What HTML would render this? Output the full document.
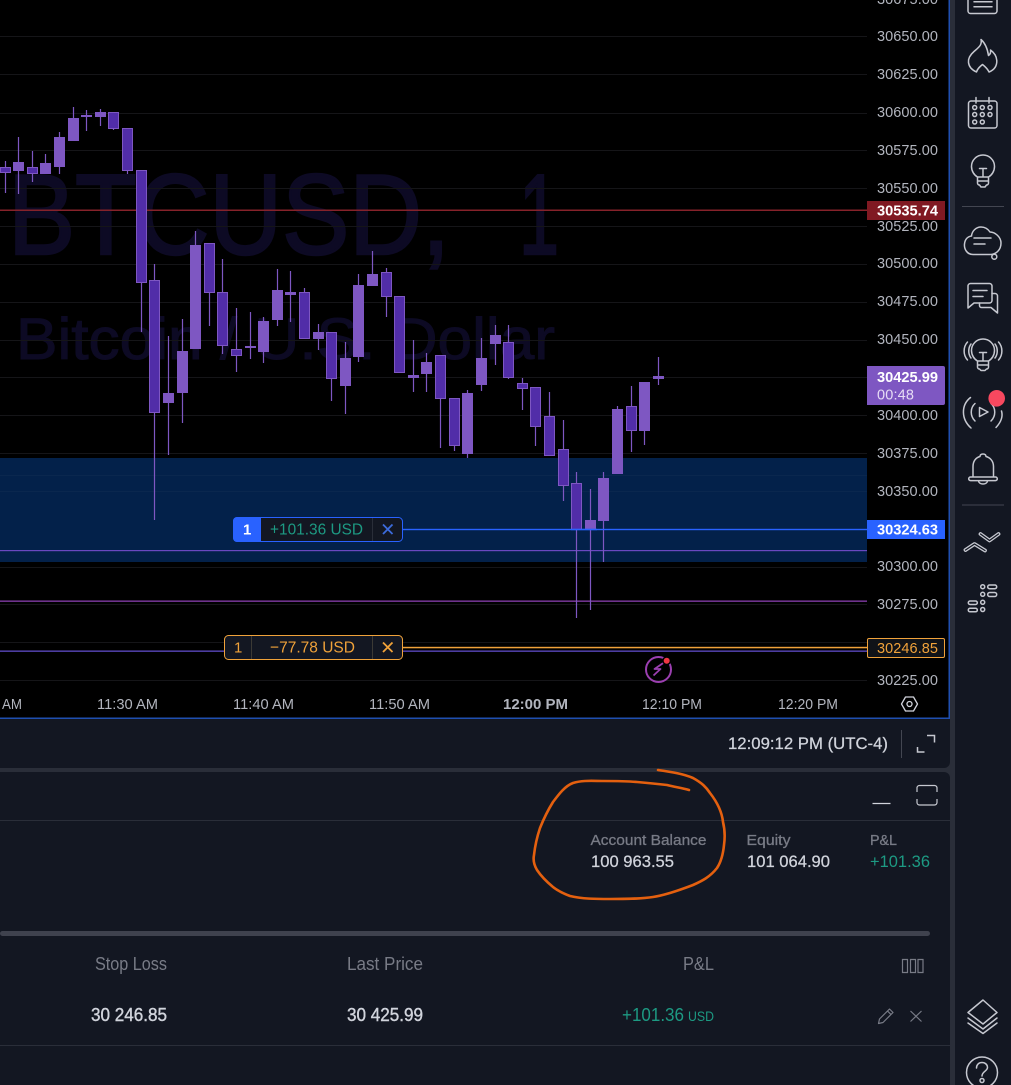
<!DOCTYPE html>
<html><head><meta charset="utf-8"><title>BTCUSD</title>
<style>
html,body{margin:0;padding:0;background:#131722;width:1011px;height:1085px;overflow:hidden}
svg{display:block}
text{font-family:"Liberation Sans",sans-serif}
.p{font-size:14.5px;fill:#b2b5be}
.t{font-size:15px;fill:#b2b5be}
.i{fill:none;stroke:#c6c8d0;stroke-width:1.5;stroke-linejoin:round;stroke-linecap:round}
</style></head><body>
<svg width="1011" height="1085" viewBox="0 0 1011 1085" xmlns="http://www.w3.org/2000/svg">
<!-- backgrounds -->
<rect width="1011" height="1085" fill="#2a2e39"/>
<rect x="955" width="56" height="1085" fill="#131722"/>
<path d="M0 719H950V762a6 6 0 0 1-6 6H0Z" fill="#131722"/>
<path d="M0 772H944a6 6 0 0 1 6 6V1085H0Z" fill="#131722"/>
<rect width="949" height="718" fill="#000"/>
<!-- watermark -->
<text x="8" y="254" font-size="114" fill="#0d0a24" stroke="#0d0a24" stroke-width="2.5" textLength="442" lengthAdjust="spacingAndGlyphs">BTCUSD,</text>
<text x="519" y="254" font-size="114" fill="#0d0a24" stroke="#0d0a24" stroke-width="2.5" textLength="40" lengthAdjust="spacingAndGlyphs">1</text>
<text x="16" y="359" font-size="58" fill="#0d0a24" stroke="#0d0a24" stroke-width="1" textLength="539" lengthAdjust="spacingAndGlyphs">Bitcoin / U.S. Dollar</text>
<!-- grid -->
<path d="M0 36.5H867M0 74.5H867M0 113.5H867M0 150.500H867M0 188.500H867M0 226.500H867M0 264.500H867M0 302.500H867M0 340.500H867M0 377.500H867M0 415.500H867M0 453.500H867M0 567.500H867M0 604.500H867M0 642.500H867M0 680.500H867" stroke="#151518" stroke-width="1"/>
<!-- band -->
<rect x="0" y="458" width="867" height="104" fill="#03214a"/>
<path d="M0 475.500H867M0 491.500H867" stroke="#0a274e" stroke-width="1"/>
<!-- lines -->
<rect x="0" y="209.500" width="867" height="1.500" fill="#86222a"/>
<rect x="0" y="550" width="867" height="1.200" fill="#6a48c0"/>
<rect x="0" y="600.500" width="867" height="1.300" fill="#8a3fae"/>
<rect x="0" y="650.500" width="867" height="1.300" fill="#5f4cc8"/>
<rect x="403" y="646.800" width="465" height="1.500" fill="#f0a23a"/>
<!-- wicks -->
<path stroke="#7e57c2" stroke-width="1.200" fill="none" d="M5.500 161V193M18.500 137V194M32.500 151V182M45.500 154V174M59.500 132V174M73.500 107V141M86.500 110V131M100.500 109V126M113.500 112V130M127.500 128V174M141.500 170V332M154.500 264V520M168.500 336V455M182.500 319V423M195.500 231V349M209.500 243V326M222.500 259V354M236.500 308V372M250.500 312V359M263.500 317V363M277.500 269V326M290.500 271V322M304.500 288V339M318.500 324V350M331.500 332V401M345.500 342V414M358.500 274V362M372.500 251V286M386.500 268V317M399.500 296V373M413.500 340V392M426.500 353V392M440.500 355V448M454.500 398V451M467.500 390V458M481.500 338V391M495.500 325V365M508.500 325V379M522.500 378V410M535.500 387V446M549.500 392V456M563.500 420V501M576.500 472V618M590.500 489V610M603.500 472V562M617.500 406V474M631.500 386V452M644.500 382V445M658.500 357V385"/>
<!-- up bodies -->
<path fill="#7e57c2" d="M13 162h11v9h-11zM40 163h11v11h-11zM54 137h11v30h-11zM68 118h11v23h-11zM81 115h11v2h-11zM95 112h11v5h-11zM163 393h11v10h-11zM177 351h11v42h-11zM190 245h11v104h-11zM245 346h11v2h-11zM258 321h11v31h-11zM272 290h11v30h-11zM285 292h11v3h-11zM313 332h11v7h-11zM340 358h11v28h-11zM353 285h11v72h-11zM367 274h11v12h-11zM408 375h11v3h-11zM421 362h11v12h-11zM462 393h11v61h-11zM476 358h11v27h-11zM490 335h11v9h-11zM585 520h11v10h-11zM598 478h11v43h-11zM612 409h11v65h-11zM639 382h11v49h-11zM653 376h11v3h-11z"/>
<!-- down bodies -->
<path fill="#512da8" stroke="#7e57c2" stroke-width="1" d="M0.500 167.500h10v5h-10zM27.500 167.500h10v6h-10zM108.500 112.500h10v16h-10zM122.500 128.500h10v42h-10zM136.500 170.500h10v112h-10zM149.500 280.500h10v132h-10zM204.500 243.500h10v49h-10zM217.500 292.500h10v53h-10zM231.500 349.500h10v6h-10zM299.500 292.500h10v46h-10zM326.500 332.500h10v46h-10zM381.500 272.500h10v24h-10zM394.500 296.500h10v76h-10zM435.500 355.500h10v43h-10zM449.500 398.500h10v47h-10zM503.500 342.500h10v35h-10zM517.500 383.500h10v5h-10zM530.500 387.500h10v39h-10zM544.500 416.500h10v39h-10zM558.500 449.500h10v36h-10zM571.500 483.500h10v46h-10zM626.500 406.500h10v24h-10z"/>
<!-- blue position line -->
<rect x="403" y="528.800" width="465" height="1.400" fill="#2962ff"/>
<rect x="571" y="528.800" width="26" height="1.400" fill="#2962ff"/>
<!-- position tag blue -->
<rect x="233.500" y="517.500" width="169" height="24" rx="4" fill="#131722" stroke="#2962ff"/>
<path d="M237 517H261V542H237a4 4 0 0 1-4-4V521a4 4 0 0 1 4-4Z" fill="#2962ff"/>
<text x="243" y="534.500" font-size="15" font-weight="bold" fill="#fff">1</text>
<text x="270" y="534.500" font-size="16" fill="#1d9a83" textLength="93" lengthAdjust="spacingAndGlyphs">+101.36 USD</text>
<rect x="372" y="518" width="1" height="23" fill="#2a2e39"/>
<path d="M383 524.500l9.500 9.500M392.500 524.500l-9.500 9.500" stroke="#3c6bdc" stroke-width="1.800" fill="none"/>
<!-- position tag orange -->
<rect x="224.500" y="635.500" width="178" height="24" rx="4" fill="#131722" stroke="#f0a23a"/>
<rect x="251" y="636" width="1" height="23" fill="#3c3a35"/>
<rect x="372" y="636" width="1" height="23" fill="#3c3a35"/>
<text x="234" y="652.500" font-size="15" fill="#f0a23a">1</text>
<text x="270" y="652.500" font-size="16" fill="#f0a23a" textLength="85" lengthAdjust="spacingAndGlyphs">−77.78 USD</text>
<path d="M383 642.500l9.500 9.500M392.500 642.500l-9.500 9.500" stroke="#f0a23a" stroke-width="1.800" fill="none"/>
<!-- lightning -->
<circle cx="658.500" cy="669.500" r="12.500" fill="none" stroke="#9b3fb0" stroke-width="2"/>
<path d="M664 662.500l-9.500 6.500h6l-7 6.500" fill="none" stroke="#9b3fb0" stroke-width="1.800" stroke-linejoin="round"/>
<circle cx="666.700" cy="660.700" r="4.500" fill="#000"/>
<circle cx="666.700" cy="660.700" r="3" fill="#f23645"/>
<!-- price axis -->
<rect x="867" y="0" width="81.500" height="717" fill="#000"/>
<g class="p">
<text x="877" y="4" textLength="61">30675.00</text>
<text x="877" y="41" textLength="61">30650.00</text>
<text x="877" y="79" textLength="61">30625.00</text>
<text x="877" y="117" textLength="61">30600.00</text>
<text x="877" y="155" textLength="61">30575.00</text>
<text x="877" y="193" textLength="61">30550.00</text>
<text x="877" y="231" textLength="61">30525.00</text>
<text x="877" y="268" textLength="61">30500.00</text>
<text x="877" y="306" textLength="61">30475.00</text>
<text x="877" y="344" textLength="61">30450.00</text>
<text x="877" y="420" textLength="61">30400.00</text>
<text x="877" y="458" textLength="61">30375.00</text>
<text x="877" y="496" textLength="61">30350.00</text>
<text x="877" y="571" textLength="61">30300.00</text>
<text x="877" y="609" textLength="61">30275.00</text>
<text x="877" y="685" textLength="61">30225.00</text>
</g>
<rect x="867" y="201" width="78" height="19" fill="#801922"/>
<text x="877" y="215.500" font-size="14.500" font-weight="bold" fill="#fff" textLength="61" lengthAdjust="spacingAndGlyphs">30535.74</text>
<path d="M867 366H943a2 2 0 0 1 2 2V403a2 2 0 0 1-2 2H867Z" fill="#7e57c2"/>
<text x="877" y="382" font-size="14.500" font-weight="bold" fill="#fff" textLength="61" lengthAdjust="spacingAndGlyphs">30425.99</text>
<text x="877" y="399.500" font-size="14.500" fill="#e6dcf5" textLength="37">00:48</text>
<rect x="867" y="520" width="78" height="19" fill="#2962ff"/>
<text x="877" y="534.500" font-size="14.500" font-weight="bold" fill="#fff" textLength="61" lengthAdjust="spacingAndGlyphs">30324.63</text>
<rect x="867.500" y="638.500" width="77" height="19" rx="1.500" fill="#101318" stroke="#f0a23a"/>
<text x="877" y="653" font-size="14.500" fill="#f0a23a" textLength="61">30246.85</text>
<!-- time axis -->
<g class="t">
<text x="2" y="709" textLength="20" lengthAdjust="spacingAndGlyphs">AM</text>
<text x="97" y="709" textLength="61" lengthAdjust="spacingAndGlyphs">11:30 AM</text>
<text x="233" y="709" textLength="61" lengthAdjust="spacingAndGlyphs">11:40 AM</text>
<text x="369" y="709" textLength="61" lengthAdjust="spacingAndGlyphs">11:50 AM</text>
<text x="503" y="709" textLength="65" font-weight="bold" lengthAdjust="spacingAndGlyphs">12:00 PM</text>
<text x="642" y="709" textLength="60" lengthAdjust="spacingAndGlyphs">12:10 PM</text>
<text x="778" y="709" textLength="60" lengthAdjust="spacingAndGlyphs">12:20 PM</text>
</g>
<path d="M901.500 704l4-7h8l4 7-4 7h-8z" fill="none" stroke="#d1d4dc" stroke-width="1.300" stroke-linejoin="round"/>
<circle cx="909.500" cy="704" r="2.500" fill="none" stroke="#d1d4dc" stroke-width="1.300"/>
<!-- chart border -->
<rect x="948.500" y="0" width="1.500" height="719" fill="#1f4fb0"/>
<rect x="0" y="717.500" width="950" height="1.500" fill="#1f4fb0"/>
<!-- time bar -->
<text x="728" y="749" font-size="17" fill="#d1d4dc" stroke="#d1d4dc" stroke-width=".25" textLength="160" lengthAdjust="spacingAndGlyphs">12:09:12 PM (UTC-4)</text>
<rect x="901" y="730" width="1" height="28" fill="#434651"/>
<path d="M917.500 747v5h7M927 735.500h7.500v7" fill="none" stroke="#c6c8d0" stroke-width="1.500"/>
<!-- panel -->
<rect x="0" y="820" width="950" height="1" fill="#2a2e39"/>
<path d="M872.500 803.500h18" stroke="#d1d4dc" stroke-width="1.200"/>
<path d="M917 792v-4a2.500 2.500 0 0 1 2.500-2.500h15a2.500 2.500 0 0 1 2.500 2.500v4M917 799v3.500a2.500 2.500 0 0 0 2.500 2.500h15a2.500 2.500 0 0 0 2.500-2.500v-3.500" fill="none" stroke="#c6c8d0" stroke-width="1.200"/>
<text x="590.500" y="845" font-size="15" fill="#787b86" stroke="#787b86" stroke-width=".3" textLength="116" lengthAdjust="spacingAndGlyphs">Account Balance</text>
<text x="591" y="867" font-size="17" fill="#d1d4dc" stroke="#d1d4dc" stroke-width=".25" textLength="83" lengthAdjust="spacingAndGlyphs">100 963.55</text>
<text x="746.500" y="845" font-size="15" fill="#787b86" stroke="#787b86" stroke-width=".3" textLength="44" lengthAdjust="spacingAndGlyphs">Equity</text>
<text x="747" y="867" font-size="17" fill="#d1d4dc" stroke="#d1d4dc" stroke-width=".25" textLength="83" lengthAdjust="spacingAndGlyphs">101 064.90</text>
<text x="870" y="845" font-size="15" fill="#787b86" stroke="#787b86" stroke-width=".3" textLength="27" lengthAdjust="spacingAndGlyphs">P&amp;L</text>
<text x="870" y="867" font-size="17" fill="#1d9a83" textLength="60" lengthAdjust="spacingAndGlyphs">+101.36</text>
<rect x="0" y="931" width="930" height="5" rx="2.500" fill="#3f424e"/>
<text x="95" y="970" font-size="18" fill="#787b86" textLength="72" lengthAdjust="spacingAndGlyphs">Stop Loss</text>
<text x="347" y="970" font-size="18" fill="#787b86" textLength="76" lengthAdjust="spacingAndGlyphs">Last Price</text>
<text x="683" y="970" font-size="18" fill="#787b86" textLength="31" lengthAdjust="spacingAndGlyphs">P&amp;L</text>
<text x="91" y="1021" font-size="18" fill="#d1d4dc" stroke="#d1d4dc" stroke-width=".4" textLength="76" lengthAdjust="spacingAndGlyphs">30 246.85</text>
<text x="347" y="1021" font-size="18" fill="#d1d4dc" stroke="#d1d4dc" stroke-width=".4" textLength="76" lengthAdjust="spacingAndGlyphs">30 425.99</text>
<text x="622" y="1021" font-size="18" fill="#1d9a83" textLength="62" lengthAdjust="spacingAndGlyphs">+101.36</text>
<text x="688" y="1021" font-size="13.500" fill="#1d9a83" textLength="26" lengthAdjust="spacingAndGlyphs">USD</text>
<rect x="0" y="1045" width="950" height="1" fill="#2a2e39"/>
<path d="M902.500 959.500h5v13h-5zM910.500 959.500h5v13h-5zM918 959.500h5v13h-5z" fill="none" stroke="#787b86" stroke-width="1.200"/>
<path d="M878.500 1023.500l1-4.500 10-10 3.500 3.500-10 10zM887.500 1011l3.500 3.500" fill="none" stroke="#787b86" stroke-width="1.200" stroke-linejoin="round"/>
<path d="M910.500 1011l11 10.500M921.500 1011l-11 10.500" fill="none" stroke="#787b86" stroke-width="1.200"/>
<!-- ink circle -->
<path d="M658 770C672 772 684 774 693 778C702 783 706 787 710 793C717 802 722 812 723 822C725 830 725 838 724 845C723 855 721 862 717 868C710 877 702 881 693 885C680 890 666 895 653 897C640 899 625 899 610 899C597 899 582 899 570 896C562 893 558 891 553 887C547 882 541 876 537 870C534 865 533 860 534 855C535 846 537 837 540 828C544 818 548 810 553 802C559 794 565 786 573 783C583 780 593 781 603 781C615 781 626 781 637 782C648 783 658 784 667 785C675 787 682 788 689 790" fill="none" stroke="#e4600f" stroke-width="2.600" stroke-linecap="round"/>
<!-- sidebar icons -->
<g class="i">
<path d="M968 0V11a2.500 2.500 0 0 0 2.500 2.500H994.500a2.500 2.500 0 0 0 2.500-2.500V0M974 1.700h18M974 6.700h18"/>
<path d="M981 39.500C982.500 45 978 48 974 51.500C970 55 968 58.500 968.500 62.500C969 67 972 70 976.500 72C977.500 68.500 980 66.500 982.500 64.500C985 66.500 987.500 68.500 989 72C994 70 997 66 996.800 60.500C996.500 56 994 52.500 990.500 50C991 52 990.500 54 988.500 55.500C987.500 49 985 43 981 39.500Z"/>
<rect x="968.500" y="101" width="28.500" height="27" rx="2.500"/>
<path d="M976 97.500v5.500M989 97.500v5.500"/>
<circle cx="974.700" cy="107.500" r="2"/><circle cx="982.300" cy="107.500" r="2"/><circle cx="990" cy="107.500" r="2"/>
<circle cx="974.700" cy="114.500" r="2"/><circle cx="982.300" cy="114.500" r="2"/><circle cx="990" cy="114.500" r="2"/>
<circle cx="974.700" cy="122" r="2"/><circle cx="982.300" cy="122" r="2"/>
<path d="M977.500 177C974 175 971.500 171 971.500 166.500A11.500 11.500 0 0 1 994.500 166.500C994.500 171 992 175 988.500 177V183a2 2 0 0 1-2 2L985 187H981L979.500 185a2 2 0 0 1-2-2ZM979.500 168.500H986.500M983 168.500V177M977.500 177H988.500M977.500 181H988.500"/>
<path d="M973 254.500C967 254.500 964 249 964.500 244C965 239 968 236.500 971.500 236C972 231 976 227 981 227C985 227 988 229 990 232C995 232 1001 237 1001 243C1001 250 996 254.500 990 254.500Z"/>
<path d="M974 238H991M974 244H985"/>
<circle cx="994.300" cy="256.700" r="2.500"/>
<path d="M985 303H974L968 308V286a2.500 2.500 0 0 1 2.500-2.500H989.500a2.500 2.500 0 0 1 2.500 2.500V300.500a2.500 2.500 0 0 1-2.500 2.500H985"/>
<path d="M973 290.500H987M973 296.500H983M992 293.500H995a2.500 2.500 0 0 1 2.500 2.500V313L991 307.500H981.500a2 2 0 0 1-2-2V303"/>
<path d="M977.500 361C974 359 971.500 355 971.500 350.500A11.500 11.500 0 0 1 994.500 350.500C994.500 355 992 359 988.500 361V367a2 2 0 0 1-2 2L985 370.500H981L979.500 369a2 2 0 0 1-2-2ZM979.500 352.500H986.500M983 352.500V361M977.500 361H988.500M977.500 365H988.500"/>
<path d="M967.500 342C963 347 963 355 967.500 360M971 344C968 348 968 354 971 358M998.500 342C1003 347 1003 355 998.500 360M995 344C998 348 998 354 995 358"/>
<path d="M979.500 407.500L988 412L979.500 416.500Z"/>
<path d="M975 403.500C970 408 970 416 975 421M970.500 397.500C961 405 961 419 971 428M991 403.500C996 408 996 416 991 421M996 427.500C1002 421 1003 416 1001.500 411"/>
<path d="M973 477V466.500C973 461 976 457.500 980 456.500C980 454.800 981.300 454 983 454C984.700 454 986 454.800 986 456.500C990 457.500 993.500 461 993.500 466.500V477M970.500 477H995.500a1.800 1.800 0 0 1 0 3.600H970.500a1.800 1.800 0 0 1 0-3.600ZM978.500 481C979 485 987 485 987.500 481"/>
</g>
<circle cx="996.700" cy="398.300" r="8.300" fill="#f7485f"/>
<path d="M962 206.500h42M962 505h42" stroke="#434651" stroke-width="1"/>
<!-- arrows -->
<path d="M965.500 550L974.500 544L985 550.500" fill="none" stroke="#c6c8d0" stroke-width="3.800" stroke-linecap="round" stroke-linejoin="round"/>
<path d="M965.500 550L974.500 544L985 550.500" fill="none" stroke="#131722" stroke-width="1.200" stroke-linecap="round" stroke-linejoin="round"/>
<path d="M980.500 534L989.500 540.500L998.500 534" fill="none" stroke="#c6c8d0" stroke-width="3.800" stroke-linecap="round" stroke-linejoin="round"/>
<path d="M980.500 534L989.500 540.500L998.500 534" fill="none" stroke="#131722" stroke-width="1.200" stroke-linecap="round" stroke-linejoin="round"/>
<g class="i">
<circle cx="982.700" cy="586.700" r="2"/><circle cx="982.700" cy="594.300" r="2"/><circle cx="982.700" cy="602.300" r="2"/><circle cx="982.700" cy="609.500" r="2"/>
<rect x="987.700" y="585" width="9" height="3.700" rx="1.800"/><rect x="987.700" y="592.500" width="9" height="4" rx="2"/>
<rect x="968.300" y="601" width="9" height="3.500" rx="1.700"/><rect x="968.300" y="608.300" width="9" height="3.500" rx="1.700"/>
<path d="M983 1000L997 1012.500L983 1024L968 1012.500Z"/>
<path d="M968 1018L983 1029L997 1018M968 1023L983 1033.500L997 1023"/>
<circle cx="982" cy="1072.500" r="15.500"/>
<path d="M976.500 1068C976.500 1064.500 979 1062.500 982 1062.500C985 1062.500 987.500 1064.500 987.500 1067.500C987.500 1071 982 1071.500 982 1076"/>
<circle cx="982" cy="1080.500" r="2"/>
</g>
</svg>
</body></html>
